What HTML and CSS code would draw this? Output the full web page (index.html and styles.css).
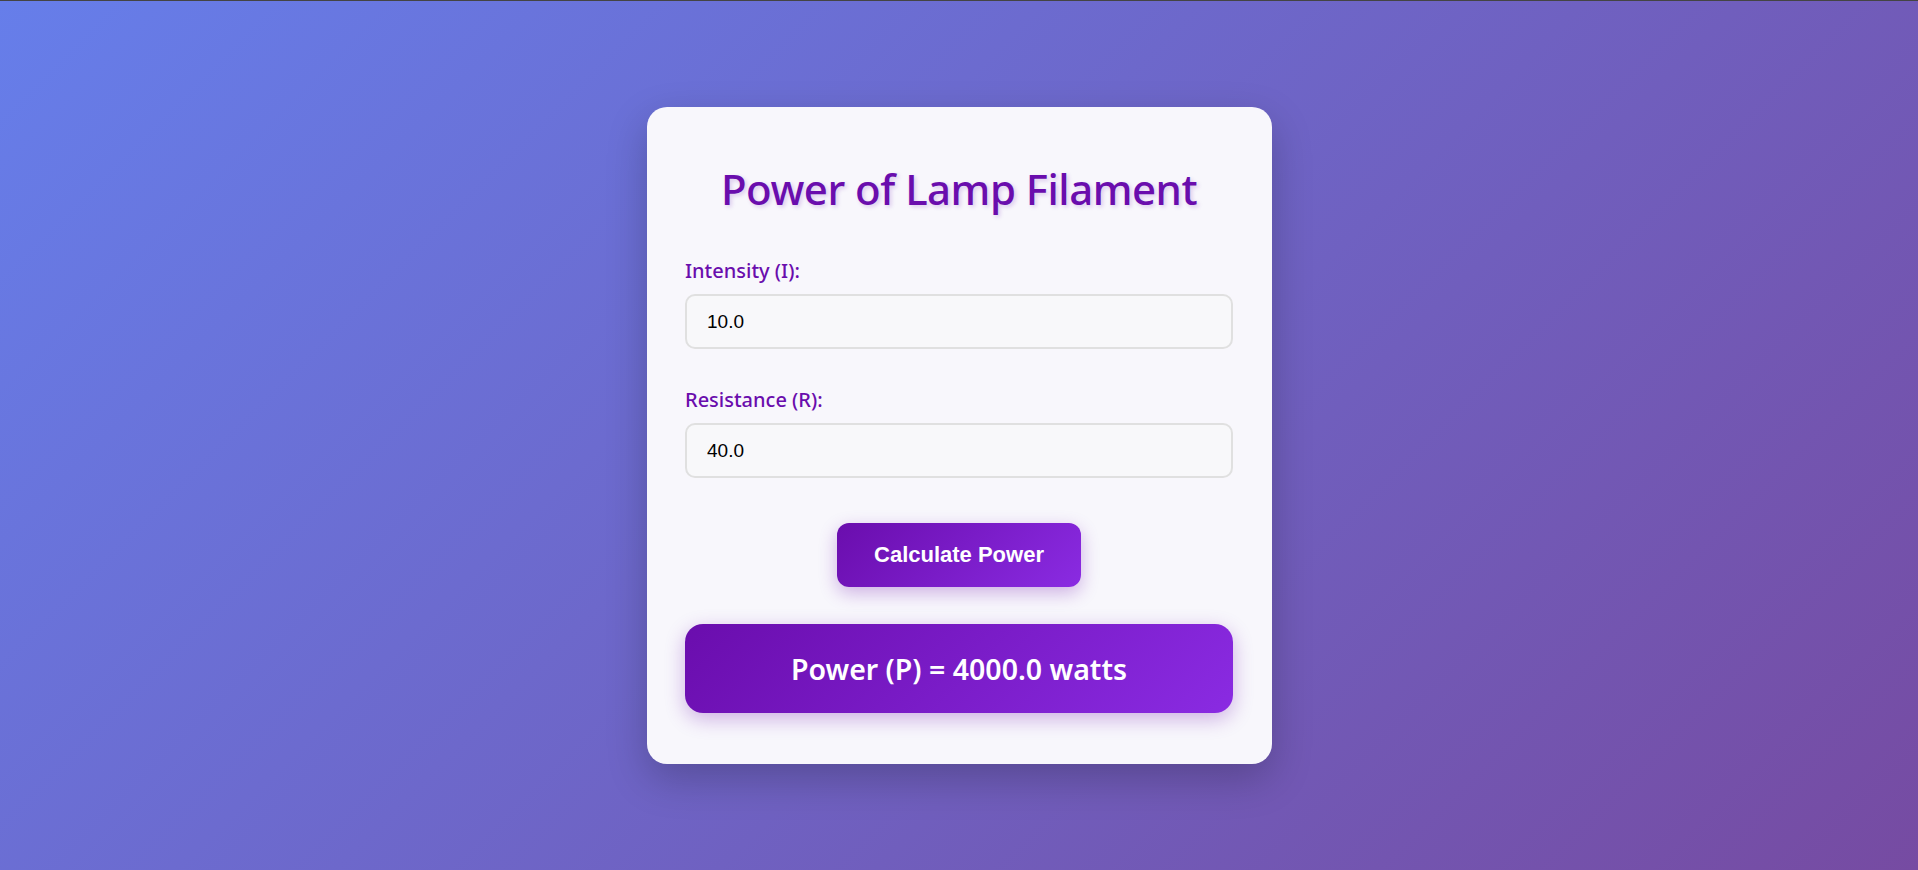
FILE: index.html
```html
<!DOCTYPE html>
<html lang="en">
<head>
<meta charset="utf-8">
<title>Power of Lamp Filament</title>
<link rel="stylesheet" href="styles.css">
</head>
<body>
<div class="card">
  <h1 class="title">Power of Lamp Filament</h1>
  <div class="field">
    <label class="field-label" for="intensity">Intensity (I):</label>
    <input class="field-input" id="intensity" type="text" value="10.0">
  </div>
  <div class="field field-last">
    <label class="field-label" for="resistance">Resistance (R):</label>
    <input class="field-input" id="resistance" type="text" value="40.0">
  </div>
  <div class="actions">
    <button class="calc-btn" type="button">Calculate Power</button>
  </div>
  <div class="result">Power (P) = 4000.0 watts</div>
</div>
</body>
</html>
```
FILE: styles.css
```css
* { box-sizing: border-box; }
html, body { margin: 0; padding: 0; }
body {
  height: 870px;
  border-top: 1px solid #444;
  background: linear-gradient(135deg, #667eea 0%, #764ba2 100%);
  display: flex;
  align-items: center;
  justify-content: center;
  font-family: "Noto Sans", "Open Sans", sans-serif;
}
.card {
  width: 625px;
  padding: 53px 38.5px 51px;
  background: #f8f7fc;
  border-radius: 20px;
  box-shadow: 0 15px 40px rgba(0, 0, 0, 0.22);
  display: flex;
  flex-direction: column;
}
.title {
  margin: 0 0 39px;
  font-size: 42px;
  line-height: 58px;
  font-weight: 550;
  letter-spacing: -0.5px;
  color: #6a0dad;
  text-align: center;
  text-shadow: 2px 2px 4px rgba(106, 13, 173, 0.2);
}
.field {
  display: flex;
  flex-direction: column;
  margin-bottom: 37px;
}
.field-last { margin-bottom: 0; }
.field-label {
  font-size: 20px;
  line-height: 27px;
  font-weight: 500;
  color: #6a0dad;
  margin-bottom: 10px;
}
.field-input {
  height: 55px;
  width: 100%;
  padding: 0 20px;
  border: 2px solid #e0e0e0;
  border-radius: 10px;
  background: #f8f8fa;
  font-family: "Liberation Sans", Arial, sans-serif;
  font-size: 19px;
  color: #000;
  outline: none;
}
.actions {
  display: flex;
  justify-content: center;
  margin-top: 45px;
}
.calc-btn {
  height: 64px;
  padding: 0 37.5px;
  border: none;
  border-radius: 12px;
  background: linear-gradient(135deg, #6a0dad 0%, #8a2be2 100%);
  color: #fff;
  font-family: "Liberation Sans", Arial, sans-serif;
  font-size: 22px;
  font-weight: 700;
  box-shadow: 0 6px 18px rgba(106, 13, 173, 0.3);
  cursor: pointer;
}
.result {
  margin-top: 37px;
  height: 89px;
  display: flex;
  align-items: center;
  justify-content: center;
  border-radius: 18px;
  background: linear-gradient(135deg, #6a0dad 0%, #8a2be2 100%);
  color: #fff;
  font-size: 28.5px;
  font-weight: 600;
  box-shadow: 0 6px 20px rgba(106, 13, 173, 0.3);
}
```
